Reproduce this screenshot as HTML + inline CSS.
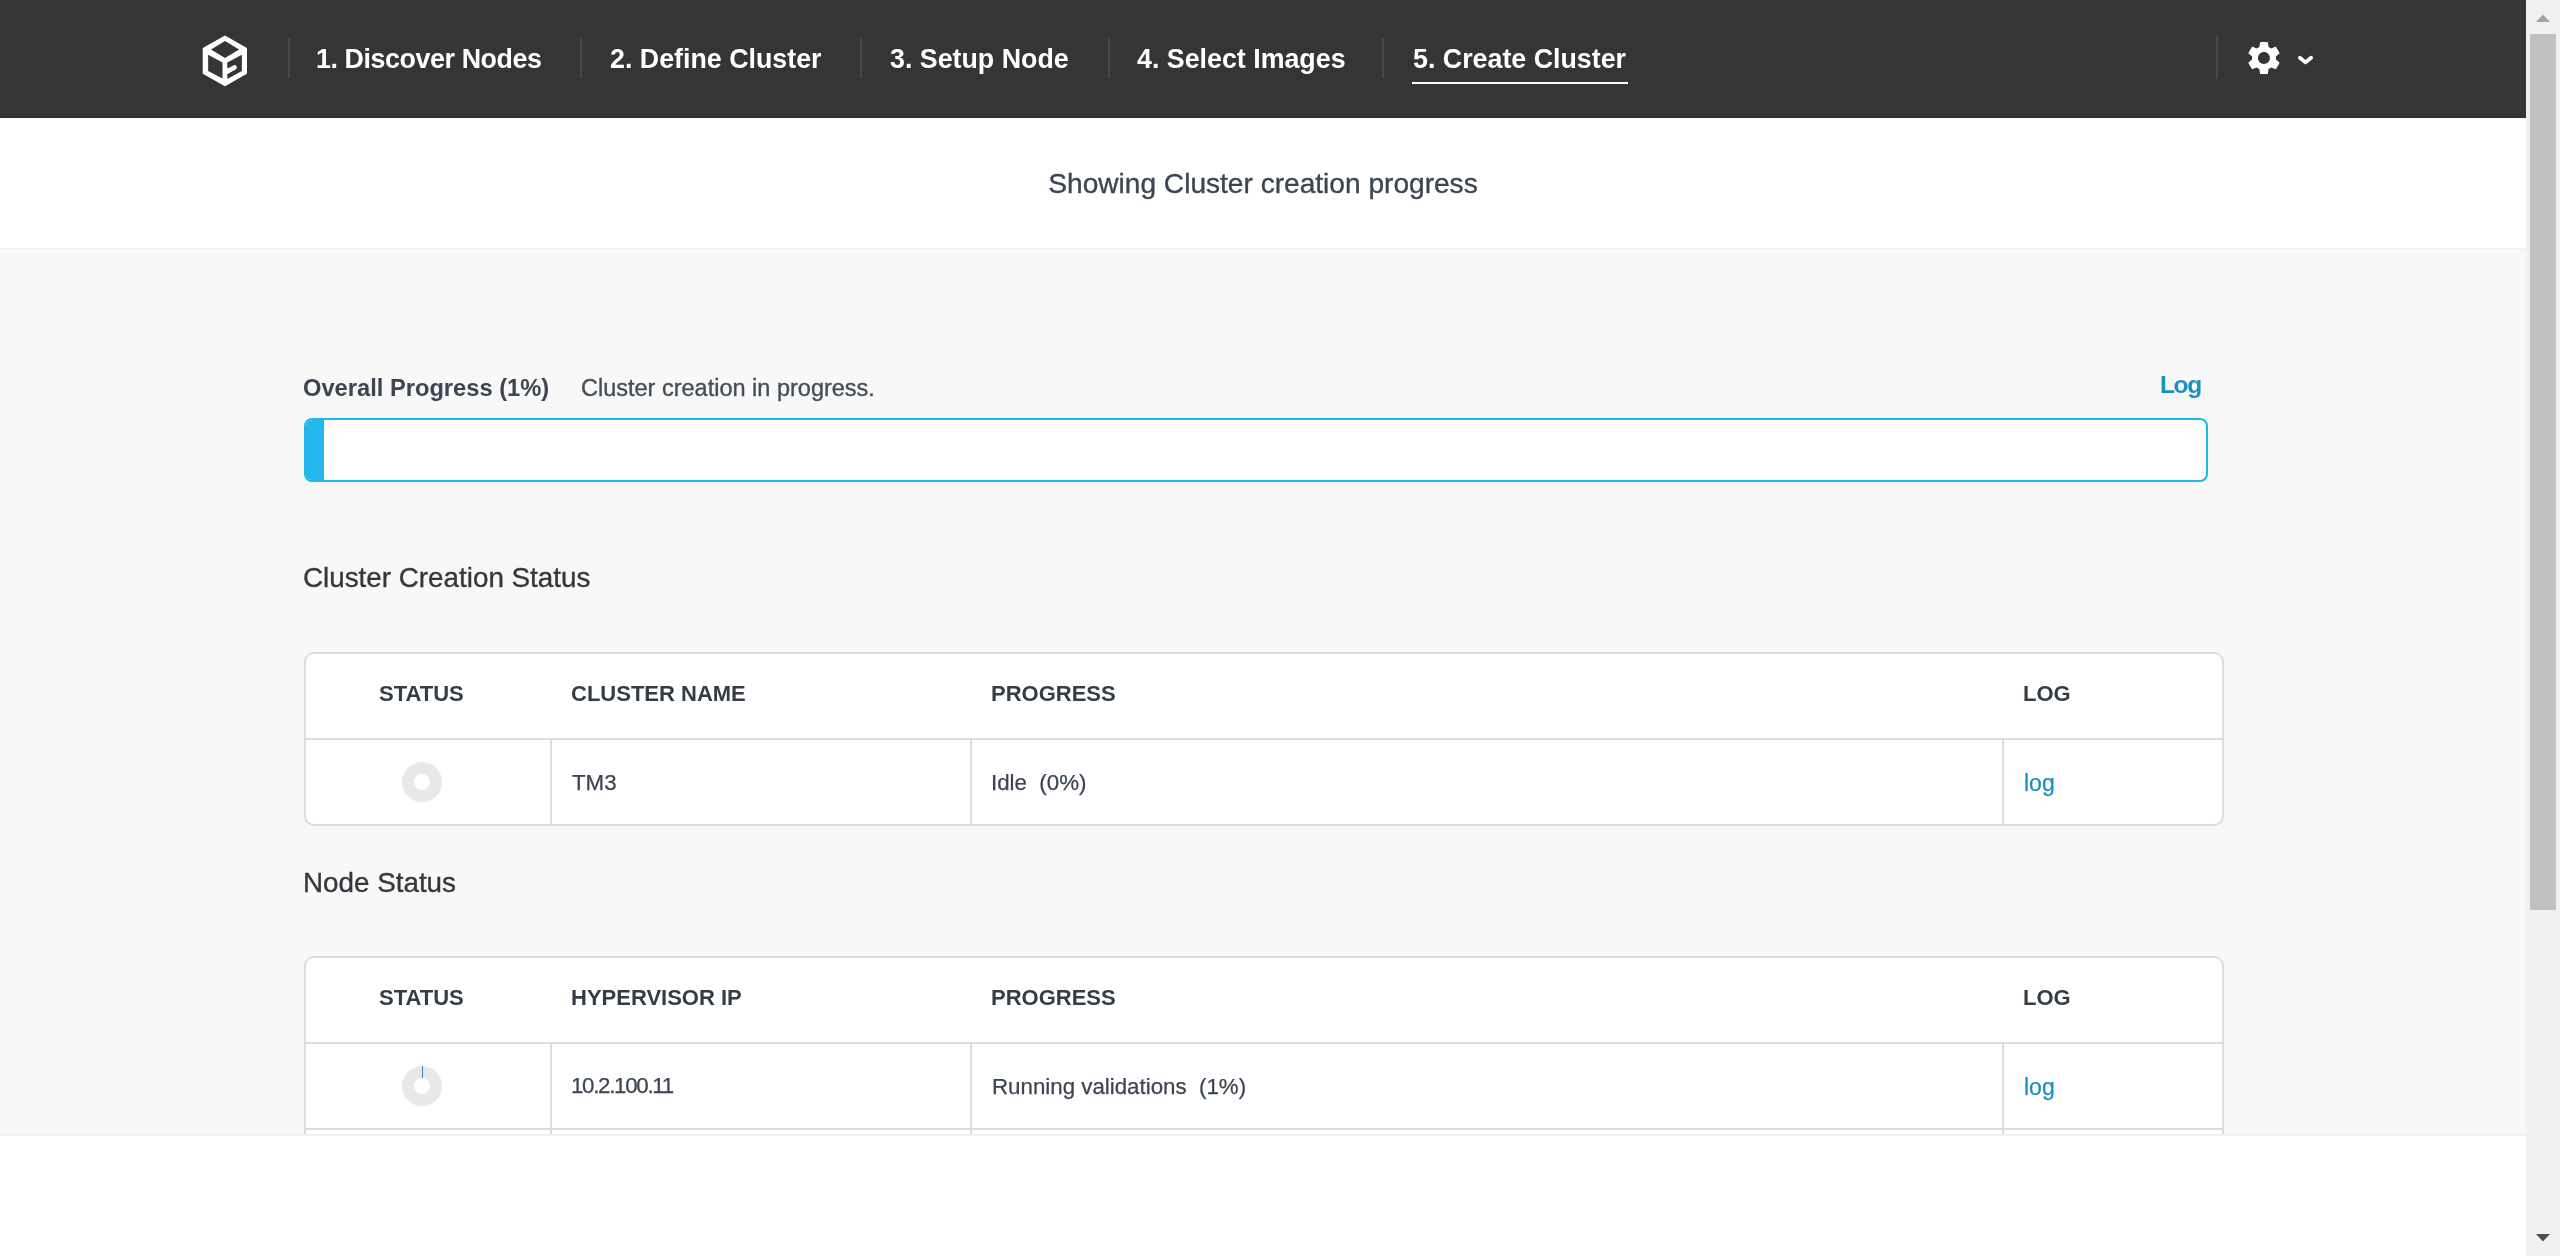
<!DOCTYPE html>
<html><head><meta charset="utf-8">
<style>
html,body{margin:0;padding:0;width:2560px;height:1256px;overflow:hidden;background:#fff;}
body{position:relative;font-family:"Liberation Sans",sans-serif;-webkit-font-smoothing:antialiased;}
.a,.nav,.th,.td{will-change:transform;}
.a{position:absolute;white-space:pre;line-height:1;}
#hdr{position:absolute;left:0;top:0;width:2526px;height:117px;background:#343537;border-bottom:1px solid #2a2b2d;}
.sep{position:absolute;top:38px;width:2px;height:40px;background:#47484b;}
.nav{position:absolute;color:#fff;font-weight:700;font-size:26.8px;white-space:pre;line-height:1;}
#sub{position:absolute;left:0;top:118px;width:2526px;height:130px;background:#fff;}
#main{position:absolute;left:0;top:248px;width:2526px;height:886px;background:#f8f8f8;overflow:hidden;}
#mainline{position:absolute;left:0;top:1134px;width:2526px;height:2px;background:#f0f2f4;}
.dk{color:#3c4550;}
.rg{-webkit-text-stroke:0.35px currentColor;}
.tbl{position:absolute;left:304px;width:1916px;border:2px solid #dcdcdc;border-radius:10px;background:#fff;}
.hl{position:absolute;height:2px;background:#dcdcdc;}
.vl{position:absolute;width:2px;background:#dcdcdc;}
.th{position:absolute;font-weight:700;font-size:22px;color:#343c45;white-space:pre;line-height:1;}
.td{position:absolute;-webkit-text-stroke:0.25px currentColor;font-size:22.3px;color:#3c4550;white-space:pre;line-height:1;}
.lnk{color:#1b8fc0;}
#sb{position:absolute;left:2526px;top:0;width:34px;height:1256px;background:#f1f1f1;}
</style></head>
<body>
<div id="hdr">
  <svg style="position:absolute;left:202px;top:35px" width="46" height="52" viewBox="0 0 46 52">
    <g transform="translate(0.7,0.6)">
    <path d="M22.3 1 L43.3 12.9 L43.3 37.5 L22.3 49.6 L1 37.5 L1 12.9 Z" fill="#fff" stroke="#fff" stroke-width="2" stroke-linejoin="round"/>
    <path d="M22.3 5.4 L36.4 14 L22.3 22.3 L8.3 14 Z" fill="#343537"/>
    <path d="M5.45 19.1 L19.8 26.8 L19.8 43 L5.45 35.4 Z" fill="#343537"/>
    <path d="M24.6 26.8 L39.2 19.1 L39.2 35.4 L24.6 43.3 Z" fill="#343537"/>
    <path d="M24.6 35.9 L31.8 31.9" stroke="#fff" stroke-width="4.8" stroke-linecap="round"/>
    <rect x="22.6" y="32.2" width="3" height="6" fill="#fff"/>
    </g>
  </svg>
  <div class="sep" style="left:288px"></div>
  <div class="nav" style="left:316px;top:46px;letter-spacing:-0.4px">1. Discover Nodes</div>
  <div class="sep" style="left:580px"></div>
  <div class="nav" style="left:610px;top:46px">2. Define Cluster</div>
  <div class="sep" style="left:860px"></div>
  <div class="nav" style="left:890px;top:46px">3. Setup Node</div>
  <div class="sep" style="left:1108px"></div>
  <div class="nav" style="left:1137px;top:46px">4. Select Images</div>
  <div class="sep" style="left:1382px"></div>
  <div class="nav" style="left:1413px;top:46px">5. Create Cluster</div>
  <div style="position:absolute;left:1412px;top:82px;width:216px;height:2px;background:#fff"></div>
  <div class="sep" style="left:2216px;top:36px;height:43px"></div>
  <svg style="position:absolute;left:2244.1px;top:37.9px" width="40.4" height="40.4" viewBox="0 0 24.28 24.28">
    <path fill="#fff" fill-rule="evenodd" d="M19.14,12.94c0.04-0.3,0.06-0.61,0.06-0.94c0-0.32-0.02-0.64-0.07-0.94l2.03-1.58c0.18-0.14,0.23-0.41,0.12-0.61 l-1.92-3.32c-0.12-0.22-0.37-0.29-0.59-0.22l-2.39,0.96c-0.5-0.38-1.03-0.7-1.62-0.94L14.4,2.81c-0.04-0.24-0.24-0.41-0.48-0.41 h-3.84c-0.24,0-0.43,0.17-0.47,0.41L9.25,5.350C8.66,5.59,8.12,5.92,7.63,6.29L5.24,5.33c-0.22-0.08-0.47,0-0.59,0.22L2.74,8.87 C2.62,9.08,2.66,9.34,2.86,9.48l2.030,1.58C4.84,11.36,4.8,11.69,4.8,12s0.02,0.64,0.07,0.94l-2.03,1.58 c-0.18,0.14-0.23,0.41-0.12,0.61l1.92,3.32c0.12,0.22,0.37,0.29,0.59,0.22l2.39-0.96c0.5,0.38,1.03,0.7,1.62,0.94l0.36,2.54 c0.05,0.24,0.24,0.41,0.48,0.41h3.84c0.24,0,0.44-0.17,0.47-0.41l0.36-2.54c0.59-0.24,1.13-0.56,1.62-0.94l2.39,0.96 c0.22,0.08,0.47,0,0.59-0.22l1.92-3.32c0.12-0.22,0.07-0.47-0.12-0.61L19.14,12.94z M12,15.6c-1.98,0-3.6-1.62-3.6-3.6 s1.62-3.6,3.6-3.6s3.6,1.62,3.6,3.6S13.98,15.6,12,15.6z"/>
  </svg>
  <svg style="position:absolute;left:2295.8px;top:51.7px" width="20" height="16" viewBox="0 0 20 16">
    <path d="M3.9 5.7 L9.5 10.4 L15.1 5.7" fill="none" stroke="#fff" stroke-width="3.8" stroke-linecap="round" stroke-linejoin="round"/>
  </svg>
</div>

<div id="sub">
  <div class="a dk rg" style="left:0;width:2526px;text-align:center;top:52px;font-size:28.1px;">Showing Cluster creation progress</div>
</div>

<div id="main">
  <div class="a dk" style="left:303px;top:129px;font-size:23.7px;font-weight:700;">Overall Progress (1%)</div>
  <div class="a dk rg" style="left:581px;top:129px;font-size:23.5px;color:#454d56;">Cluster creation in progress.</div>
  <div class="a lnk" style="left:2160px;top:125px;font-size:24.5px;font-weight:700;letter-spacing:-1.4px;">Log</div>
  <div style="position:absolute;left:304px;top:170px;width:1900px;height:60px;border:2px solid #1fb6ec;border-radius:8px;background:#fff;overflow:hidden;">
    <div style="position:absolute;left:0;top:0;width:18px;height:60px;background:#22b8ee;"></div>
  </div>

  <div class="a rg" style="left:303px;top:316px;font-size:27.8px;color:#33383d;">Cluster Creation Status</div>
  <div class="tbl" style="top:404px;height:170px;">
    <div class="hl" style="left:0;top:84px;width:1916px;"></div>
    <div class="vl" style="left:244px;top:86px;height:84px;"></div>
    <div class="vl" style="left:664px;top:86px;height:84px;"></div>
    <div class="vl" style="left:1696px;top:86px;height:84px;"></div>
    <div class="th" style="left:73px;top:29px;">STATUS</div>
    <div class="th" style="left:265px;top:29px;">CLUSTER NAME</div>
    <div class="th" style="left:685px;top:29px;">PROGRESS</div>
    <div class="th" style="left:1717px;top:29px;">LOG</div>
    <div style="position:absolute;left:96px;top:108px;width:40px;height:40px;border-radius:50%;background:#e8e8e8;">
      <div style="position:absolute;left:11.7px;top:11.7px;width:16.6px;height:16.6px;border-radius:50%;background:#fff;"></div>
    </div>
    <div class="td" style="left:266px;top:118px;">TM3</div>
    <div class="td" style="left:684.5px;top:118px;">Idle  (0%)</div>
    <div class="td lnk" style="left:1718px;top:118px;font-size:23px;">log</div>
  </div>

  <div class="a rg" style="left:303px;top:621px;font-size:27.8px;color:#33383d;">Node Status</div>
  <div class="tbl" style="top:708px;height:600px;">
    <div class="hl" style="left:0;top:84px;width:1916px;"></div>
    <div class="hl" style="left:0;top:170px;width:1916px;"></div>
    <div class="vl" style="left:244px;top:86px;height:514px;"></div>
    <div class="vl" style="left:664px;top:86px;height:514px;"></div>
    <div class="vl" style="left:1696px;top:86px;height:514px;"></div>
    <div class="th" style="left:73px;top:29px;">STATUS</div>
    <div class="th" style="left:265px;top:29px;">HYPERVISOR IP</div>
    <div class="th" style="left:685px;top:29px;">PROGRESS</div>
    <div class="th" style="left:1717px;top:29px;">LOG</div>
    <div style="position:absolute;left:96px;top:108px;width:40px;height:40px;border-radius:50%;background:#e8e8e8;">
      <div style="position:absolute;left:11.7px;top:11.7px;width:16.6px;height:16.6px;border-radius:50%;background:#fff;"></div>
      <div style="position:absolute;left:19.6px;top:0;width:1.4px;height:12px;background:#1a8cb9;"></div>
    </div>
    <div class="td" style="left:265px;top:117px;letter-spacing:-1.3px;">10.2.100.11</div>
    <div class="td" style="left:686px;top:118px;">Running validations  (1%)</div>
    <div class="td lnk" style="left:1718px;top:118px;font-size:23px;">log</div>
  </div>
</div>
<div id="mainline"></div>
<div style="position:absolute;left:0;top:248px;width:2526px;height:1px;background:#eef0f2;"></div>

<div id="sb">
  <svg style="position:absolute;left:0;top:0" width="34" height="34"><path d="M10 22 L17 14.5 L24 22 Z" fill="#a3a3a3"/></svg>
  <div style="position:absolute;left:4px;top:34px;width:26px;height:876px;background:#c1c1c1;"></div>
  <svg style="position:absolute;left:0;top:1221px" width="34" height="34"><path d="M10 13 L24 13 L17 20.5 Z" fill="#505050"/></svg>
</div>
</body></html>
